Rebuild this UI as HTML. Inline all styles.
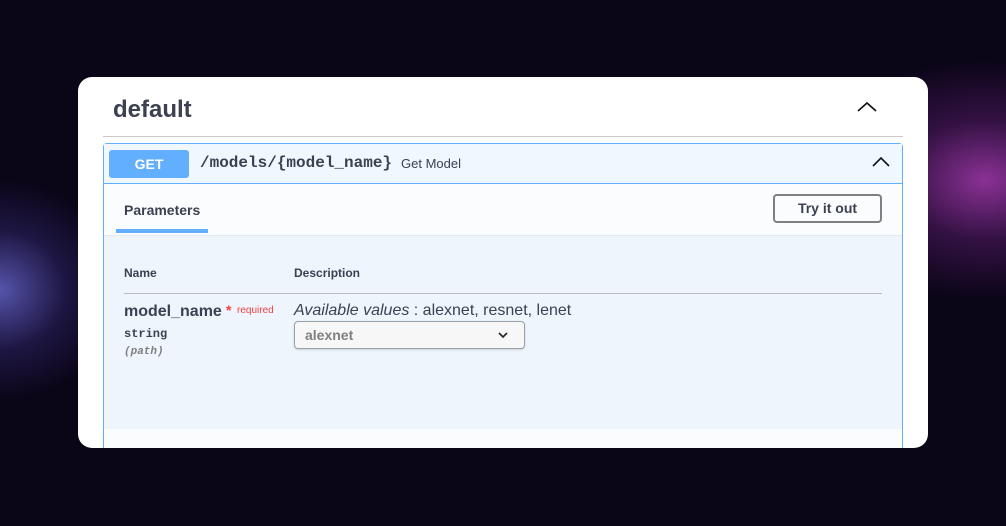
<!DOCTYPE html>
<html><head><style>
*{margin:0;padding:0;box-sizing:border-box}
body{width:1006px;height:526px;overflow:hidden;position:relative;font-family:"Liberation Sans",sans-serif;
background:radial-gradient(ellipse 170px 120px at 985px 180px,rgba(170,60,180,.8),rgba(110,35,130,.4) 50%,transparent 100%),
radial-gradient(ellipse 120px 110px at 0px 290px,rgba(110,110,220,.75),rgba(70,60,160,.3) 55%,transparent 100%),
#0b0518;}
.card{position:absolute;left:78px;top:77px;width:850px;height:371px;background:#fff;border-radius:14px;overflow:hidden}
.h{position:absolute;left:35px;top:19px;font-size:24px;font-weight:bold;color:#3b4151}
.hl{position:absolute;left:25px;top:59px;width:800px;height:1px;background:#c9c9c9}
.op{position:absolute;left:25px;top:66px;width:800px;height:320px;border:1px solid #61affe;border-radius:4px;background:#fbfcfe}
.sum{height:40px;background:#eff7ff;border-bottom:1px solid #61affe;position:relative}
.get{position:absolute;left:5px;top:6px;width:80px;height:28px;background:#61affe;border-radius:3px;color:#fff;font-weight:bold;font-size:14px;text-align:center;line-height:28px}
.path{position:absolute;left:96px;top:10px;font-family:"Liberation Mono",monospace;font-weight:bold;font-size:16px;color:#3b4151}
.desc{position:absolute;left:297px;top:12px;font-size:13px;color:#3b4151}
.tab{position:absolute;left:20px;top:58px;font-size:14px;font-weight:bold;color:#3b4151}
.ul{position:absolute;left:12px;top:85px;width:92px;height:4px;background:#61affe}
.try{position:absolute;left:669px;top:50px;width:109px;height:29px;border:2px solid #808080;border-radius:4px;font-size:14px;font-weight:bold;color:#3b4151;text-align:center;line-height:25px}
.body{position:absolute;left:0;top:91px;width:798px;height:194px;background:#eef5fd;border-top:1px solid #e2e8ef}
.th{position:absolute;top:30px;font-size:12px;font-weight:bold;color:#3b4151}
.tl{position:absolute;left:20px;top:57px;width:758px;height:1px;background:#b7bcc4}
.nm{position:absolute;left:20px;top:67px;font-size:16px;font-weight:bold;color:#3b4151}
.req{position:absolute;left:122px;top:64px;font-size:10px;color:#f93e3e}
.ty{position:absolute;left:20px;top:91px;font-family:"Liberation Mono",monospace;font-weight:bold;font-size:12px;color:#3b4151}
.pa{position:absolute;left:20px;top:110px;font-family:"Liberation Mono",monospace;font-weight:bold;font-style:italic;font-size:11px;color:#808080}
.av{position:absolute;left:190px;top:66px;font-size:16px;color:#3b4151}
.sel{position:absolute;left:190px;top:85px;width:231px;height:28px;border:1px solid #9aa0a8;border-radius:4px;background:#f7f7f7;font-size:14px;font-weight:bold;color:#808080;padding-left:10px;line-height:26px;box-shadow:0 1px 2px rgba(0,0,0,.15)}
</style></head><body>
<div class="card">
<div class="h">default</div>
<svg style="position:absolute;left:779px;top:24px" width="20" height="12"><path d="M1 10 L10 2 L19 10" fill="none" stroke="#111" stroke-width="1.6"/></svg>
<div class="hl"></div>
<div class="op">
<div class="sum"><div class="get">GET</div><div class="path">/models/{model_name}</div><div class="desc">Get Model</div>
<svg style="position:absolute;left:768px;top:12px" width="18" height="12"><path d="M1 10 L9 2 L17 10" fill="none" stroke="#111" stroke-width="1.6"/></svg></div>
<div class="tab">Parameters</div><div class="ul"></div>
<div class="try">Try it out</div>
<div class="body">
<div class="th" style="left:20px">Name</div><div class="th" style="left:190px">Description</div>
<div class="tl"></div>
<div class="nm">model_name</div><div class="req"><span style="font-size:14px;font-weight:bold;position:relative;top:2px">*</span>&nbsp;&nbsp;required</div>
<div class="ty">string</div><div class="pa">(path)</div>
<div class="av"><i>Available values</i> : alexnet, resnet, lenet</div>
<div class="sel">alexnet<svg style="position:absolute;left:203px;top:10px" width="10" height="7"><path d="M1 1 L5 5 L9 1" fill="none" stroke="#222" stroke-width="1.6"/></svg></div>
</div>
</div>
</div>
</body></html>
